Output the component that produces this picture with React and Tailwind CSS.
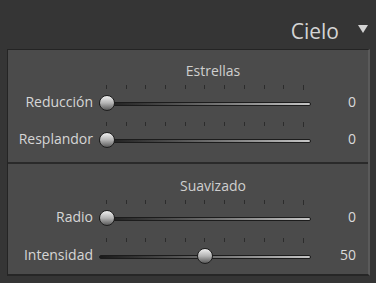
import React from "react";

const font = { fontFamily: '"Open Sans", "Noto Sans", sans-serif' };

function Slider({ pct }) {
  const ticks = Array.from({ length: 11 });
  return (
    <div className="w-[212px] flex flex-col">
      <div className="flex justify-between px-[7px] h-[5px] items-start">
        {ticks.map((_, i) => (
          <div
            key={i}
            className={i === 10 ? "w-px h-[5px] bg-[#2c2c2c]" : "w-px h-[4px] bg-[#2c2c2c]"}
          />
        ))}
      </div>
      <div className="relative h-[16px] mt-[5px] flex items-center">
        <div className="w-full h-[4px] rounded-full border border-[#1c1c1c] bg-gradient-to-r from-[#1a1a1a] via-[#6a6a6a] to-[#c6c6c6] mt-[1px]" />
        <div
          className="absolute top-0 w-[16px] h-[16px] rounded-full border border-[#1e1e1e] bg-gradient-to-b from-[#f0f0f0] via-[#b4b4b4] to-[#5c5c5c]"
          style={{ left: `${(pct / 100) * 196}px` }}
        />
      </div>
    </div>
  );
}

function Row({ label, value, pct }) {
  return (
    <div className="flex items-end">
      <div className="w-[85px] text-right text-[14px] leading-[18px] text-[#d6d6d6] pb-[0px]">
        {label}
      </div>
      <div className="ml-[6px]">
        <Slider pct={pct} />
      </div>
      <div className="w-[45px] text-right text-[14px] leading-[18px] text-[#dadada] pb-[0px]">
        {value}
      </div>
    </div>
  );
}

export default function App() {
  return (
    <div className="w-[376px] h-[283px] bg-[#353535] flex flex-col" style={font}>
      <div className="h-[49px] flex items-center justify-end pr-[8px] pt-[12px]">
        <span className="text-[21px] leading-[24px] text-[#d4d4d4]">Cielo</span>
        <svg width="10" height="9" viewBox="0 0 10 9" className="ml-[19px] mb-[3px]">
          <polygon points="0,0 10,0 5,8" fill="#d4d4d4" />
        </svg>
      </div>
      <div className="ml-[7px] w-[363px] border-t border-l border-[#242424] border-r-2 border-r-[#5a5a5a] border-b-2 border-b-[#262626] bg-[#4b4b4b] flex flex-col">
        <div className="h-[114px] flex flex-col border-b-2 border-[#2a2a2a]">
          <div className="h-[35px] flex items-center justify-center pl-[50px] pt-[6px] text-[14px] text-[#cfcfcf]">
            Estrellas
          </div>
          <div className="flex flex-col gap-[11px]">
            <Row label="Reducción" value="0" pct={0} />
            <Row label="Resplandor" value="0" pct={0} />
          </div>
        </div>
        <div className="h-[110px] flex flex-col">
          <div className="h-[36px] flex items-center justify-center pl-[50px] pt-[6px] text-[14px] text-[#cfcfcf]">
            Suavizado
          </div>
          <div className="flex flex-col gap-[12px]">
            <Row label="Radio" value="0" pct={0} />
            <Row label="Intensidad" value="50" pct={50} />
          </div>
        </div>
      </div>
    </div>
  );
}
